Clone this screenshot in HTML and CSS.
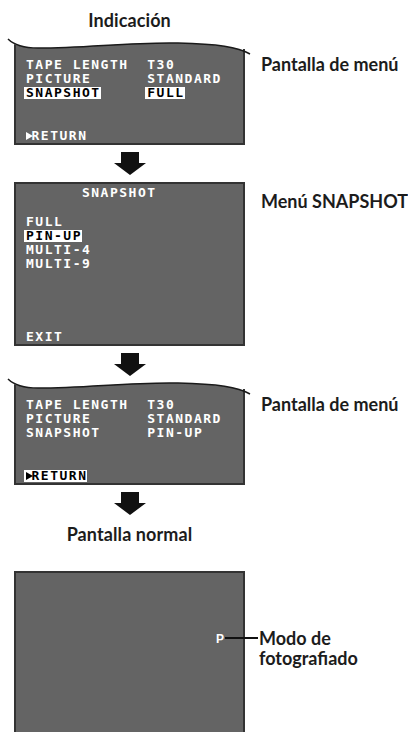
FILE: index.html
```html
<!DOCTYPE html>
<html>

<head>
    <meta charset="utf-8" />
    <title>snapshot_menu.html</title>
    <meta name="viewport" content="width=device-width, initial-scale=1">
    <link rel="stylesheet" href="styles.css">
</head>

<body>
    <main class="sheet">
        <h1 class="caption">Indicación</h1>

        <!-- step 1 : menu screen -->
        <section class="step">
            <div class="screen-wrap">
                <svg class="wave" width="244" height="18" viewBox="0 0 244 18">
                    <clipPath id="clipA"><rect x="6" y="0" width="231" height="18" /></clipPath>
                    <path clip-path="url(#clipA)" fill="#646464" d="M0,1 C6,7 14,10 30,10 C80,10 120,4 170,5 C210,6 230,9 242,16 L242,18 L0,18 Z" />
                    <path fill="none" stroke="#333" stroke-width="2" d="M7,7 V18 M236,11 V18" />
                    <path fill="none" stroke="#1a1a1a" stroke-width="1.5" d="M0,1 C6,7 14,10 30,10 C80,10 120,4 170,5 C210,6 230,9 242,16" />
                </svg>
                <div class="osd osd-open">
                    <div class="row">TAPE LENGTH  T30</div>
                    <div class="row">PICTURE      STANDARD</div>
                    <div class="row"><span class="hl">SNAPSHOT</span>     <span class="hl">FULL</span></div>
                    <div class="row bottom"><span class="tri"></span>RETURN</div>
                </div>
            </div>
            <p class="label">Pantalla de menú</p>
        </section>

        <div class="arrow-box">
            <svg class="arrow" width="32" height="23" viewBox="0 0 32 23"><polygon points="7,0 25,0 25,11 32,11 16,23 0,11 7,11" /></svg>
        </div>

        <!-- step 2 : snapshot submenu -->
        <section class="step">
            <div class="osd osd-full">
                <div class="row">      SNAPSHOT</div>
                <div class="list">
                    <div class="row">FULL</div>
                    <div class="row"><span class="hl">PIN-UP</span></div>
                    <div class="row">MULTI-4</div>
                    <div class="row">MULTI-9</div>
                </div>
                <div class="row bottom">EXIT</div>
            </div>
            <p class="label label-mid">Menú SNAPSHOT</p>
        </section>

        <div class="arrow-box arrow-tight">
            <svg class="arrow" width="32" height="23" viewBox="0 0 32 23"><polygon points="7,0 25,0 25,11 32,11 16,23 0,11 7,11" /></svg>
        </div>

        <!-- step 3 : menu screen again -->
        <section class="step">
            <div class="screen-wrap">
                <svg class="wave" width="244" height="18" viewBox="0 0 244 18">
                    <clipPath id="clipB"><rect x="6" y="0" width="231" height="18" /></clipPath>
                    <path clip-path="url(#clipB)" fill="#646464" d="M0,1 C6,7 14,10 30,10 C80,10 120,4 170,5 C210,6 230,9 242,16 L242,18 L0,18 Z" />
                    <path fill="none" stroke="#333" stroke-width="2" d="M7,7 V18 M236,11 V18" />
                    <path fill="none" stroke="#1a1a1a" stroke-width="1.5" d="M0,1 C6,7 14,10 30,10 C80,10 120,4 170,5 C210,6 230,9 242,16" />
                </svg>
                <div class="osd osd-open">
                    <div class="row">TAPE LENGTH  T30</div>
                    <div class="row">PICTURE      STANDARD</div>
                    <div class="row">SNAPSHOT     PIN-UP</div>
                    <div class="row bottom"><span class="hl"><span class="tri"></span>RETURN</span></div>
                </div>
            </div>
            <p class="label">Pantalla de menú</p>
        </section>

        <div class="arrow-box arrow-last">
            <svg class="arrow" width="32" height="23" viewBox="0 0 32 23"><polygon points="7,0 25,0 25,11 32,11 16,23 0,11 7,11" /></svg>
        </div>

        <h2 class="caption caption-normal">Pantalla normal</h2>

        <!-- step 4 : normal screen -->
        <section class="step">
            <div class="osd osd-plain">
                <div class="mode">P</div>
            </div>
            <div class="callout">
                <span class="lead"></span>
                <p class="label label-call">Modo de<br>fotografiado</p>
            </div>
        </section>
    </main>
</body>

</html>
```
FILE: styles.css
```css
html,
body {
    margin: 0;
    height: 732px;
    overflow: hidden;
    background: #fff;
}

body {
    font-family: Lato, "Open Sans", sans-serif;
    color: #1c1c1c;
}

.sheet {
    width: 408px;
}

/* headings over the left column */
.caption {
    width: 259px;
    margin: 10px 0 8px;
    font-size: 18px;
    line-height: 20px;
    font-weight: bold;
    letter-spacing: 0.1px;
    text-align: center;
}

.caption-normal {
    margin: 0 0 27px;
}

.step {
    display: grid;
    grid-template-columns: 261px 1fr;
    align-items: start;
}

.label {
    margin: 16px 0 0;
    font-size: 18px;
    line-height: 20px;
    font-weight: bold;
    white-space: nowrap;
}

.label-mid {
    margin-top: 9px;
}

/* ! screens */
.screen-wrap {
    margin-left: 14px;
    width: 231px;
}

.wave {
    display: block;
    margin-left: -6px;
    overflow: visible;
}

.osd {
    box-sizing: border-box;
    display: flex;
    flex-direction: column;
    margin-left: 14px;
    width: 231px;
    padding: 2px 0 0 10px;
    background: #646464;
    border: 2px solid #333;
    color: #fff;
    font-family: "DejaVu Sans Mono", monospace;
    font-weight: bold;
    font-size: 13px;
    line-height: 14px;
    letter-spacing: 1.5px;
}

.osd-open {
    margin-left: 0;
    height: 89px;
    border-top: none;
}

.osd-full {
    height: 164px;
}

.osd-plain {
    height: 165px;
    padding: 60px 19px 0 0;
}

.row {
    white-space: pre;
}

.list {
    margin-top: 15px;
}

.bottom {
    margin-top: auto;
}

.hl {
    display: inline-block;
    margin-left: -2px;
    padding: 0 0 0 2px;
    line-height: 12px;
    background: #fff;
    color: #000;
}

.tri {
    display: inline-block;
    width: 0;
    height: 0;
    margin-right: -1.5px;
    border-left: 7px solid currentColor;
    border-top: 4.5px solid transparent;
    border-bottom: 4.5px solid transparent;
}

/* ! arrows */
.arrow-box {
    width: 259px;
    margin: 7px 0;
}

.arrow-tight {
    margin-bottom: 2px;
}

.arrow-last {
    margin-bottom: 9px;
}

.arrow {
    display: block;
    margin: 0 auto;
    fill: #111;
}

/* ! normal screen */
.mode {
    align-self: flex-end;
    font-family: "Liberation Sans", Arial, sans-serif;
    font-size: 12px;
    line-height: 12px;
    letter-spacing: 0;
    color: #fff;
}

.callout {
    display: flex;
    align-items: flex-start;
    margin-top: 57px;
}

.lead {
    flex: none;
    width: 33px;
    height: 2px;
    margin: 9px 1px 0 -36px;
    background: #111;
}

.label-call {
    margin: 0;
    line-height: 20px;
}
```
